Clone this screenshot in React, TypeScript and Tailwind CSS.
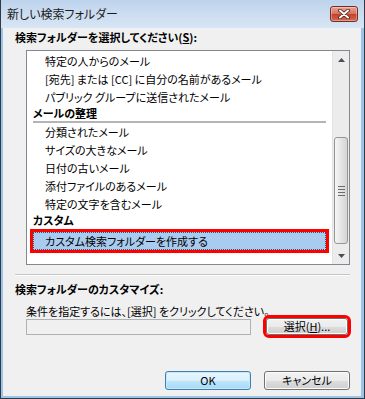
const jp = "font-['Noto_Sans_CJK_JP','Noto_Sans',sans-serif] [font-feature-settings:'palt']";

const groups: { title: string; items: string[]; tall?: boolean }[] = [
  {
    title: "",
    items: [
      "特定の人からのメール",
      "[宛先] または [CC] に自分の名前があるメール",
      "パブリック グループに送信されたメール",
    ],
  },
  {
    title: "メールの整理",
    items: [
      "分類されたメール",
      "サイズの大きなメール",
      "日付の古いメール",
      "添付ファイルのあるメール",
      "特定の文字を含むメール",
    ],
  },
  { title: "カスタム", items: [], tall: true },
];

function CloseButton() {
  return (
    <div className="w-[28px] h-[16px] rounded-[3px] border border-[#7a2a1e] bg-[linear-gradient(#e8a396,#d4705c_50%,#c1412b_51%,#cf6a4f)] flex items-center justify-center shadow-[inset_0_0_0_1px_rgba(255,255,255,0.35)]">
      <svg width="12" height="10" viewBox="0 0 12 10">
        <path d="M2 1.5 L10 8.5 M10 1.5 L2 8.5" stroke="#4a1a12" strokeWidth="3.6" strokeLinecap="round" />
        <path d="M2 1.5 L10 8.5 M10 1.5 L2 8.5" stroke="#ffffff" strokeWidth="2" strokeLinecap="round" />
      </svg>
    </div>
  );
}

function Arrow({ up }: { up?: boolean }) {
  return (
    <div className="h-[17px] flex items-center justify-center">
      <svg width="7" height="4" viewBox="0 0 7 4">
        <path d={up ? "M0 4 L3.5 0 L7 4 Z" : "M0 0 L7 0 L3.5 4 Z"} fill="#4d4d4d" />
      </svg>
    </div>
  );
}

function ScrollBar() {
  return (
    <div className="w-[17px] bg-[#ececec] border-l border-[#e2e2e2] flex flex-col">
      <Arrow up />
      <div className="h-[69px]" />
      <div className="h-[107px] mx-[1px] rounded-[3px] border border-[#959595] bg-[linear-gradient(90deg,#f6f6f6,#e4e4e4_50%,#d4d4d4)] flex items-center justify-center">
        <div className="flex flex-col gap-[2px]">
          <div className="w-[7px] h-[1px] bg-[#6c6c6c]" />
          <div className="w-[7px] h-[1px] bg-[#6c6c6c]" />
          <div className="w-[7px] h-[1px] bg-[#6c6c6c]" />
          <div className="w-[7px] h-[1px] bg-[#6c6c6c]" />
        </div>
      </div>
      <div className="flex-1" />
      <Arrow />
    </div>
  );
}

function ListBox() {
  return (
    <div className="ml-[23px] mt-[5px] w-[324px] h-[215px] border border-[#828790] bg-white flex">
      <div className="flex-1 pl-[6px] pr-[6px] pt-[1px] text-[11px] text-black">
        {groups.map((g, i) => (
          <div key={i}>
            {g.title && (
              <div className={`${g.tall ? "h-[19px]" : "h-[17px]"} flex flex-col`}>
                <div className="leading-[15px] font-bold">{g.title}</div>
                <div className="mt-auto h-[2px] bg-[#b4b4b4]" />
              </div>
            )}
            {g.items.map((t) => (
              <div key={t} className="h-[18px] leading-[18px] pl-[12px] whitespace-nowrap">
                {t}
              </div>
            ))}
          </div>
        ))}
        <div className="h-[18px] leading-[16px] pl-[11px] bg-[#a8cbef] border border-dotted border-[#3a4d63] outline-[3px] outline-solid outline-[#ff0000] whitespace-nowrap">
          カスタム検索フォルダーを作成する
        </div>
      </div>
      <ScrollBar />
    </div>
  );
}

function Button({ children, primary, className = "" }: { children: React.ReactNode; primary?: boolean; className?: string }) {
  return (
    <div
      className={`rounded-[3px] border flex items-center justify-center text-[11px] text-black ${
        primary
          ? "border-[#3c7fb1] bg-[linear-gradient(#eaf6fd,#d9f0fc_50%,#bee6fd_51%,#a7d9f5)] shadow-[inset_0_0_0_1px_#c5e8fb]"
          : "border-[#707070] bg-[linear-gradient(#f2f2f2,#ebebeb_50%,#dddddd_51%,#cfcfcf)] shadow-[inset_0_0_0_1px_#fcfcfc]"
      } ${className}`}
    >
      {children}
    </div>
  );
}

export default function App() {
  return (
    <div className={`w-[365px] h-[399px] bg-[#9cc3e8] border-x border-b border-[#2e3a46] flex flex-col ${jp}`}>
      <div className="h-[28px] shrink-0 flex items-center pl-[6px] pr-[6px] bg-[linear-gradient(#bdd3ec,#cfdff1_60%,#d7e5f4)]">
        <span className="text-[12px] text-[#1b1b1b]">新しい検索フォルダー</span>
        <div className="ml-auto">
          <CloseButton />
        </div>
      </div>
      <div className="flex-1 ml-[2px] mr-[3px] mb-[2px] bg-[#f0f0f0] flex flex-col text-[11px] text-black">
        <div className="mt-[2px] pl-[12px] leading-[15px] font-bold">
          検索フォルダーを選択してください(<span className="underline">S</span>):
        </div>
        <ListBox />
        <div className="ml-[12px] mt-[9px] w-[335px] h-[1px] bg-[#c4c4c4] shadow-[0_1px_0_#ffffff]" />
        <div className="mt-[7px] pl-[12px] leading-[15px] font-bold">検索フォルダーのカスタマイズ:</div>
        <div className="mt-[8px] pl-[23px] leading-[13px]">条件を指定するには、[選択] をクリックしてください。</div>
        <div className="flex items-end">
          <div className="ml-[23px] w-[225px] h-[16px] border border-[#adb2b5] bg-[#f0f0f0]" />
          <Button className="ml-[15px] w-[82px] h-[17px] outline-[3px] outline-solid outline-[#ff0000]">
            選択(<span className="underline">H</span>)...
          </Button>
        </div>
        <div className="mt-[36px] flex justify-end gap-[13px] pr-[11px]">
          <Button primary className="w-[86px] h-[19px]">OK</Button>
          <Button className="w-[86px] h-[19px]">キャンセル</Button>
        </div>
      </div>
    </div>
  );
}
